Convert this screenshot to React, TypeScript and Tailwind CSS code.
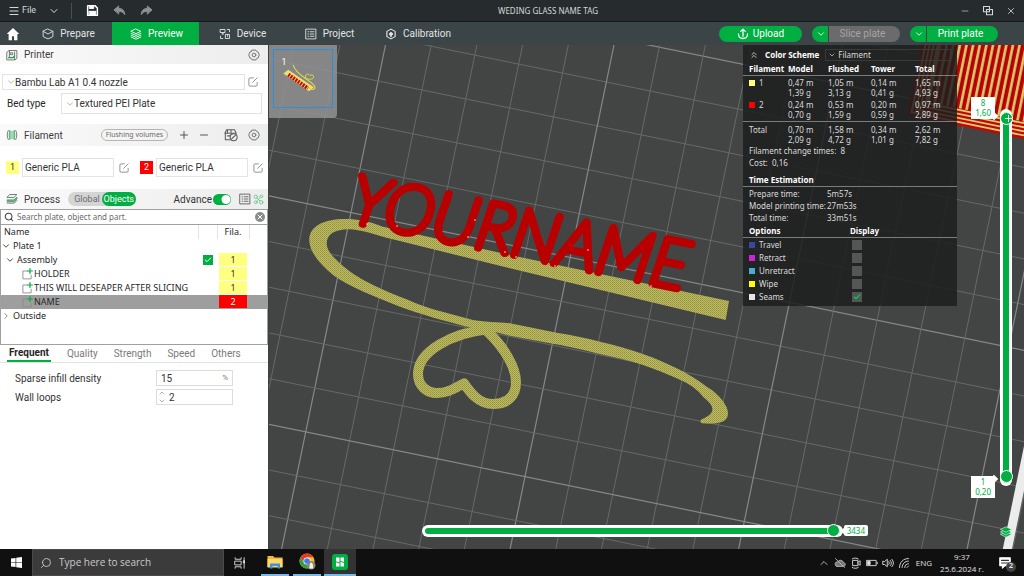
import { ReactNode } from "react";
import {
    Check,
    ChevronDown,
    ChevronRight,
    ChevronUp,
    ChevronsUp,
    Menu,
    Minus,
    Plus,
    Search,
    X,
} from "lucide-react";


const filaments = [
    { id: 1, name: "Generic PLA", color: "bg-[#ffff80] text-[#333]" },
    { id: 2, name: "Generic PLA", color: "bg-[#ff0000] text-white" },
];

const parts = [
    { name: "HOLDER", filament: 1, selected: false },
    { name: "THIS WILL DESEAPER AFTER SLICING", filament: 1, selected: false },
    { name: "NAME", filament: 2, selected: true },
];

const usage = [
    { label: "1", color: "bg-[#ffff80]", meters: ["0,47 m", "1,05 m", "0,14 m", "1,65 m"], grams: ["1,39 g", "3,13 g", "0,41 g", "4,93 g"] },
    { label: "2", color: "bg-[#ff0000]", meters: ["0,24 m", "0,53 m", "0,20 m", "0,97 m"], grams: ["0,70 g", "1,59 g", "0,59 g", "2,89 g"] },
    { label: "Total", color: "", meters: ["0,70 m", "1,58 m", "0,34 m", "2,62 m"], grams: ["2,09 g", "4,72 g", "1,01 g", "7,82 g"] },
];

const times = [
    { label: "Prepare time:", value: "5m57s" },
    { label: "Model printing time:", value: "27m53s" },
    { label: "Total time:", value: "33m51s" },
];

const options = [
    { label: "Travel", color: "bg-[#38489b]", checked: false },
    { label: "Retract", color: "bg-[#cd22d6]", checked: false },
    { label: "Unretract", color: "bg-[#49adcf]", checked: false },
    { label: "Wipe", color: "bg-[#ffff00]", checked: false },
    { label: "Seams", color: "bg-[#e6e6e6]", checked: true },
];

/* ---------- icons ---------- */

const Svg = ({ className, children, box = 16 }: { className: string, children: ReactNode, box?: number }) => (
    <svg viewBox={`0 0 ${box} ${box}`} className={className} fill="none" stroke="currentColor" strokeWidth={1.2} strokeLinecap="round" strokeLinejoin="round" aria-hidden="true">
        {children}
    </svg>
);

const HexGear = ({ className }: { className: string }) => (
    <Svg className={className}>
        <path d="M5.500 1.500h5l1 1.800 2 .7 1.500 4-1.500 4-2 .7-1 1.800h-5l-1-1.800-2-.7L1 8l1.500-4 2-.7z" />
        <circle cx="8" cy="8" r="2.500" />
    </Svg>
);

const EditIcon = () => (
    <Svg className="size-3 text-[#8a8a8a]">
        <path d="M8.500 2.500H4A1.500 1.500 0 0 0 2.500 4v8A1.500 1.500 0 0 0 4 13.500h8a1.500 1.500 0 0 0 1.500-1.500V8.500M7.500 8.500l6-6" />
    </Svg>
);

const PartIcon = () => (
    <Svg className="size-3">
        <path d="M8.500 4H2.500v10.500h11V9.500" stroke="#8b8b8b" />
        <path d="M12 .8v6.400M8.800 4h6.400" stroke="#00ae42" strokeWidth={1.600} />
    </Svg>
);

const CubeIcon = () => (
    <Svg className="size-3">
        <path d="M8 1.500 14.500 4.500v7L8 14.500l-6.500-3v-7zM1.500 4.500 8 8l6.500-3.500" />
    </Svg>
);

const LayersIcon = ({ className }: { className: string }) => (
    <Svg className={className}>
        <path d="M8 1.500 14.500 4.500 8 7.500 1.500 4.500zM1.500 7 8 10l6.500-3M1.500 9.500l6.500 3 6.500-3M1.500 12 8 15l6.500-3" />
    </Svg>
);

const DeviceIcon = () => (
    <Svg className="size-3">
        <path d="M2 2h6v4H2zM4 8h2M5 6v2M11 2h3v3M2 11v3h3M9 8.500h5V14H9zM11.500 8.500v3" />
    </Svg>
);

const ListIcon = ({ className }: { className: string }) => (
    <Svg className={className}>
        <path d="M1.500 1.500h13v13h-13zM4 5h1M7 5h5M4 8h1M7 8h5M4 11h1M7 11h5" />
    </Svg>
);

const CalibrationIcon = () => (
    <Svg className="size-3">
        <path d="M8 1.500 13.500 4.500v7L8 14.500l-5.500-3v-7z" strokeWidth={1.500} />
        <circle cx="8" cy="8" r="2" fill="currentColor" />
        <path d="M8 8v3.500" strokeWidth={1.800} />
    </Svg>
);

const PrinterIcon = () => (
    <Svg className="size-3 text-[#6b6b6b]">
        <path d="M1.500 4 4 2h10.500v10.500L12 14.500H1.500zM4.500 2v9.500M11.500 4v10" />
        <path d="M3.500 11.500h6l1.500-2" stroke="#00ae42" strokeWidth={1.800} />
        <path d="M6 5h3v2.500H6z" />
    </Svg>
);

const FilamentIcon = () => (
    <Svg className="size-3 text-[#6b6b6b]">
        <path d="M3 2C1 5 1 11 3 14M13 2c2 3 2 9 0 12" />
        <path d="M5.500 3v10M8 3v10M10.500 3v10M5 2c-1 3-1 9 0 12M11 2c1 3 1 9 0 12" stroke="#3fae66" />
    </Svg>
);

const ProcessIcon = () => (
    <Svg className="size-3 text-[#6b6b6b]">
        <path d="M1.500 5.500 5 2h9.500L11 5.500zM1.500 13.500H11l3.500-3.500" />
        <path d="M1.500 9.500H11l3.500-3.500" stroke="#00ae42" strokeWidth={1.500} />
        <path d="M1.500 11.500H11l3.500-3.500" />
    </Svg>
);

const AmsIcon = () => (
    <Svg className="size-[14px] text-[#5c5c5c]">
        <path d="M3 2h9l2 4H1zM1.500 6v7.500H7M4 9h3M4 2v4M8 2v4" />
        <circle cx="11" cy="10.500" r="4" />
        <path d="m9 12 4-3.500" />
    </Svg>
);

const CompareIcon = () => (
    <Svg className="size-[11px] text-[#5fc98a]">
        <circle cx="4" cy="4" r="2.500" />
        <circle cx="12" cy="3.500" r="2" />
        <circle cx="4" cy="12" r="2" />
        <circle cx="12" cy="12" r="2.500" />
        <path d="m6 6 4 4M10.500 5 5.500 10.500" />
    </Svg>
);

/* ---------- top bars ---------- */

const TitleBar = () => (
    <header className="flex h-[22px] shrink-0 items-center border-b border-[#14191a] bg-[#262c2e] text-[#d5d8d8]">
        <div className="flex flex-1 items-center">
            <button className="ml-2 flex items-center gap-0.5 text-[9px]"><Menu className="size-3" />File</button>
            <button className="ml-3 flex" aria-label="File menu"><ChevronDown className="size-3" /></button>
            <span className="ml-[11px] h-4 w-px bg-[#4b5152]" />
            <button className="ml-3.5 flex text-white" aria-label="Save">
                <Svg className="size-[13px]">
                    <path d="M2 2h9l3 3v9H2z" strokeWidth={1.800} />
                    <path d="M4.500 2h5v3.500h-5zM4 9h8v5H4z" fill="currentColor" />
                </Svg>
            </button>
            <button className="ml-3.5 flex text-[#8d9293]" aria-label="Undo">
                <Svg className="size-[13px]"><path d="M1.500 7 7 2.500V5.500c4.500 0 7 2.500 7.500 7.500-2-2.800-4-4-7.500-4v3z" fill="currentColor" /></Svg>
            </button>
            <button className="ml-3.5 flex text-[#8d9293]" aria-label="Redo">
                <Svg className="size-[13px]"><path d="M14.500 7 9 2.500V5.500C4.500 5.500 2 8 1.500 13c2-2.800 4-4 7.500-4v3z" fill="currentColor" /></Svg>
            </button>
        </div>
        <h1 className="ml-20 font-['Noto_Sans'] text-[8px] whitespace-nowrap">WEDING GLASS NAME TAG</h1>
        <div className="flex flex-1 items-center justify-end gap-3 pr-2">
            <button aria-label="Minimize"><Minus className="size-2.5" strokeWidth={1.500} /></button>
            <button aria-label="Restore">
                <Svg className="size-3"><path d="M2 2h8v7H2zM6 6h8v7H6z" strokeWidth={1.400} /></Svg>
            </button>
            <button aria-label="Close"><X className="size-2.5" strokeWidth={2} /></button>
        </div>
    </header>
);

const SplitButton = ({ label, disabled }: { label: string, disabled?: boolean }) => (
    <div className="flex h-4 overflow-hidden rounded-full text-[10px]">
        <button className="flex w-4 items-center justify-end bg-[#00ae42] pr-0.5 text-white" aria-label={label + " options"}><ChevronDown className="size-2.5" /></button>
        <button disabled={disabled} className={disabled ? "ml-px w-[71px] bg-[#6b6b6b] pr-1 text-[#a5a5a5]" : "ml-px w-[71px] bg-[#00ae42] pr-1 text-white"}>{label}</button>
    </div>
);

const NavBar = () => (
    <nav className="flex h-[23px] shrink-0 items-center bg-[#3b4446] text-[10px] text-[#e2e5e5]">
        <button className="flex w-[25px] justify-center text-white" aria-label="Home">
            <svg viewBox="0 0 16 16" className="size-[14px]" fill="currentColor"><path d="M8 1 0.800 8H3v7h3.800v-4.500h2.400V15H13V8h2.200z" /></svg>
        </button>
        <button className="flex h-full w-[87px] items-center justify-center gap-1.5"><CubeIcon />Prepare</button>
        <button className="flex h-full w-[87px] items-center justify-center gap-1.5 bg-[#00ae42] pl-0.5 text-white"><LayersIcon className="size-3" />Preview</button>
        <button className="flex h-full w-[87px] items-center justify-center gap-1.5"><DeviceIcon />Device</button>
        <button className="flex h-full w-[87px] items-center justify-center gap-1.5"><ListIcon className="size-3" />Project</button>
        <button className="flex h-full w-[90px] items-center justify-center gap-1.5"><CalibrationIcon />Calibration</button>
        <div className="ml-auto flex gap-2.5 pr-[26px]">
            <button className="flex h-4 w-[83px] items-center justify-center gap-1 rounded-full bg-[#00ae42] text-white">
                <Svg className="size-3"><path d="M8 11V1.500M5 4.500 8 1.500l3 3M2 8c0 8 12 8 12 0" strokeWidth={1.700} /></Svg>
                Upload
            </button>
            <SplitButton label="Slice plate" disabled />
            <SplitButton label="Print plate" />
        </div>
    </nav>
);

/* ---------- sidebar ---------- */

const SectionHeader = ({ icon, title, children }: { icon: ReactNode, title: string, children: ReactNode }) => (
    <div className="flex items-center bg-linear-to-r from-[#fafafa] to-[#ededed] pr-2 pl-1.5">
        {icon}
        <h2 className="ml-1.5 text-[10px] text-[#3c3c3c]">{title}</h2>
        {children}
    </div>
);

const SelectBox = ({ id, label, value, className }: { id: string, label?: string, value: string, className: string }) => (
    <div className={"relative flex items-center border border-[#e3e3e3] " + className}>
        <ChevronDown className="absolute left-[3px] size-2.5 text-[#8a8a8a]" strokeWidth={1.500} />
        <select id={id} aria-label={label} defaultValue={value} className="h-full w-full appearance-none bg-transparent pl-3 text-[10px] text-[#333] outline-none">
            <option>{value}</option>
        </select>
    </div>
);

const FilamentCell = ({ id }: { id: number }) => (
    <td className="p-0 px-0.5">
        <div className={"mb-px h-[13px] text-center leading-[13px] " + filaments[id - 1].color}>{id}</div>
    </td>
);

const Sidebar = () => (
    <aside className="flex w-[269px] shrink-0 flex-col border-r border-[#3c4041] bg-white text-[#333]">
        <div className="flex flex-col [&>*]:h-[19px]">
            <SectionHeader icon={<PrinterIcon />} title="Printer">
                <HexGear className="ml-auto size-3 text-[#6b6b6b]" />
            </SectionHeader>
        </div>
        <div className="mt-2.5 flex items-center gap-0.5 pl-0.5">
            <SelectBox id="printer" label="Printer" value="Bambu Lab A1 0.4 nozzle" className="h-4 w-[243px]" />
            <button aria-label="Edit printer"><EditIcon /></button>
        </div>
        <div className="mt-[3px] flex items-center pl-[7px]">
            <label htmlFor="bed" className="w-[54px] text-[10px] text-[#262626]">Bed type</label>
            <SelectBox id="bed" value="Textured PEI Plate" className="h-[21px] w-[201px]" />
        </div>

        <div className="mt-[10px] flex flex-col [&>*]:h-[22px]">
            <SectionHeader icon={<FilamentIcon />} title="Filament">
                <button className="ml-auto h-3 w-[67px] rounded-full border border-[#b5b5b5] font-['Noto_Sans'] text-[7px] leading-[10px] text-[#6b6b6b]">Flushing volumes</button>
                <button className="ml-2.5 text-[#555]" aria-label="Add filament"><Plus className="size-3" /></button>
                <button className="ml-2 text-[#555]" aria-label="Remove filament"><Minus className="size-3" /></button>
                <button className="ml-3.5" aria-label="Sync filaments"><AmsIcon /></button>
                <button className="ml-2.5" aria-label="Filament settings"><HexGear className="size-3 text-[#6b6b6b]" /></button>
            </SectionHeader>
        </div>
        <div className="mt-3 flex gap-2.5 pr-1 pl-1.5">
            {filaments.map((f) => (
                <div key={f.id} className="flex flex-1 items-center">
                    <span className={"flex size-[13px] items-center justify-center text-[9px] " + f.color}>{f.id}</span>
                    <input aria-label={"Filament " + f.id} defaultValue={f.name} className="ml-[3px] h-[19px] w-0 flex-1 border border-[#e3e3e3] px-0.5 text-[10px] outline-none" />
                    <button className="ml-1 flex" aria-label={"Edit filament " + f.id}><EditIcon /></button>
                </div>
            ))}
        </div>

        <div className="mt-[12px] flex flex-col [&>*]:h-5">
            <SectionHeader icon={<ProcessIcon />} title="Process">
                <div className="ml-2 flex h-[14px] rounded-full bg-[#d4d4d4] text-[9px] leading-[14px]">
                    <button className="pl-1.5 text-[#6b6b6b]">Global</button>
                    <button className="ml-0.5 w-[34px] rounded-full bg-[#00ae42] text-white">Objects</button>
                </div>
                <label htmlFor="advance" className="ml-auto text-[10px]">Advance</label>
                <input id="advance" type="checkbox" role="switch" defaultChecked className="ml-px h-[11px] w-[18px] appearance-none rounded-full bg-[#00ae42] bg-[radial-gradient(circle_at_13px_50%,white_4px,transparent_5px)]" />
                <button className="ml-2" aria-label="Parameter list"><ListIcon className="size-3 text-[#5c5c5c]" /></button>
                <button className="ml-0.5 -mr-1" aria-label="Compare presets"><CompareIcon /></button>
            </SectionHeader>
        </div>

        <div className="flex h-4 items-center border border-[#a0a0a0] pr-0.5 pl-[3px]">
            <Search className="size-2.5 text-[#444]" strokeWidth={2.500} />
            <input aria-label="Search objects" placeholder="Search plate, object and part." className="ml-[3px] w-0 flex-1 font-['Noto_Sans'] text-[8px] outline-none placeholder:text-[#6b6b6b]" />
            <button className="flex size-2.5 items-center justify-center rounded-full bg-[#8a8a8a] text-white" aria-label="Clear search"><X className="size-2" strokeWidth={3} /></button>
        </div>
        <div className="h-[120px] border-x border-b border-[#a0a0a0]">
            <table className="w-full table-fixed border-collapse font-['Noto_Sans'] text-[9px] text-[#262626]">
                <thead>
                    <tr className="h-[14px] text-left leading-[14px]">
                        <th className="p-0 pl-[3px] font-normal">Name</th>
                        <th className="w-[19px] border-l border-[#e3e3e3] p-0"></th>
                        <th className="w-8 border-x border-[#e3e3e3] p-0 text-center font-normal">Fila.</th>
                        <th className="w-[18px] p-0"></th>
                    </tr>
                </thead>
                <tbody className="leading-[14px]">
                    <tr>
                        <td className="p-0" colSpan={4}><span className="flex items-center gap-0.5"><ChevronDown className="size-2.5" />Plate 1</span></td>
                    </tr>
                    <tr>
                        <td className="p-0"><span className="flex items-center gap-0.5 pl-1"><ChevronDown className="size-2.5" />Assembly</span></td>
                        <td className="p-0">
                            <label className="relative flex items-center justify-center">
                                <input type="checkbox" defaultChecked aria-label="Assembly printable" className="size-2.5 appearance-none bg-[#00ae42]" />
                                <Check className="absolute size-2 text-white" strokeWidth={3} />
                            </label>
                        </td>
                        <FilamentCell id={1} />
                        <td className="p-0"></td>
                    </tr>
                    {parts.map((p) => (
                        <tr key={p.name} className={p.selected ? "bg-[#9e9e9e]" : ""}>
                            <td className="p-0" colSpan={2}><span className="flex items-center gap-px pl-5 whitespace-nowrap"><PartIcon />{p.name}</span></td>
                            <FilamentCell id={p.filament} />
                            <td className="p-0"></td>
                        </tr>
                    ))}
                    <tr>
                        <td className="p-0" colSpan={4}><span className="flex items-center gap-0.5"><ChevronRight className="size-2.5 text-[#777]" />Outside</span></td>
                    </tr>
                </tbody>
            </table>
        </div>

        <div className="flex h-[18px] items-stretch gap-4 border-b border-[#e3e3e3] px-[7px] text-[10px] text-[#7a7a7a]">
            <button className="border-b-2 border-[#00ae42] px-0.5 font-bold text-[#262626]">Frequent</button>
            <button>Quality</button>
            <button>Strength</button>
            <button>Speed</button>
            <button>Others</button>
        </div>
        <div className="mt-[7px] flex flex-col gap-[3px] pl-[15px] text-[10px]">
            <div className="flex items-center">
                <label htmlFor="infill" className="w-[141px]">Sparse infill density</label>
                <div className="flex h-4 w-[77px] items-center border border-[#dcdcdc] pr-1 pl-1">
                    <input id="infill" defaultValue="15" className="w-0 flex-1 outline-none" />
                    <span className="text-[8px] text-[#7a7a7a]">%</span>
                </div>
            </div>
            <div className="flex items-center">
                <label htmlFor="loops" className="w-[141px]">Wall loops</label>
                <div className="flex h-4 w-[77px] items-center border border-[#dcdcdc] pl-px">
                    <span className="flex flex-col text-[#8a8a8a]"><ChevronUp className="size-2" /><ChevronDown className="size-2" /></span>
                    <input id="loops" defaultValue="2" className="ml-[3px] w-0 flex-1 outline-none" />
                </div>
            </div>
        </div>
    </aside>
);

/* ---------- 3d plate ---------- */

const ribbon = "M729 301 L510 255 L383 226.700 C368 221 357 219 346 219 C322 219 309.300 227 309.300 240 C309.300 252 320 264 333 275 C350 287 375 297 400 306.700 C420 314 445 321 468 327 L495 332 L510 335.700 L550 343.300 C566 346 580 349 596.700 353.300 C613 357 628 360 643 365 C655 369 667 374 676.700 378.300 C690 384 698 390 703 396.700 C708 401 713 405 712.300 410 C712 414 707 417 700.700 420 C700 422 701 423 703 423.300 C712 424 721 423.500 725 420 C729 417 728.500 411 726 406 C721 397 714 391 706.700 386.700 C698 380 688 373.500 676.700 368.300 C666 363 655 358 643 354 C629 349 614 345 600 341.700 C586 338 571 335 556.700 332.700 L510 323.300 C498 322 485 322 473 320 L433 309.300 C422 306 411 301 400 296.700 C388 292 377 287 366.700 281.700 C354 275 344 268 336.700 260 C330 254 326.700 249 326.700 243.300 C326.700 234 336 229 350 229.300 C364 230 378 236 391.700 239 L510 268.300 L725.700 320 Z";
const heart = "M490 329 C450 333 418 352 418 374 C418 386 427 393 437 393 C448 393 455 388 464 383.500 C470 392 478 404 493 404 C508 404 516 396 516 382 C516 368 505 348 487 331";
const seams = [[367, 224], [397, 226], [475, 220], [468, 237], [505, 252], [516, 257], [588, 250], [555, 266], [651, 286]];

const gridLines = Array.from({ length: 30 }, (_, i) => i - 14);

const Plate = () => (
    <svg viewBox="269 45 755 504" preserveAspectRatio="xMinYMin slice" className="absolute inset-0 h-full w-full" role="img" aria-label="Sliced plate">
        <defs>
            <pattern id="weave" width="2" height="2" patternUnits="userSpaceOnUse">
                <rect width="2" height="2" fill="#bebb5c" />
                <rect width="1" height="1" fill="#93924a" />
                <rect x="1" y="1" width="1" height="1" fill="#a09f52" />
            </pattern>
            <pattern id="infill-lines" width="6.500" height="10" patternUnits="userSpaceOnUse">
                <rect width="6.500" height="10" fill="#c80505" />
                <rect x="1" width="2.500" height="10" fill="#d3cf72" />
                <rect x="4.500" width="0.800" height="10" fill="#8e0000" />
            </pattern>
        </defs>
        <rect x="269" y="45" width="755" height="504" fill="#434544" />
        {gridLines.map((k) => (
            <g key={k} stroke={k % 5 === 0 ? "#868887" : "#676968"} strokeWidth={k % 5 === 0 ? 1.200 : 1}>
                <line x1={842.500 + k * 45.700} y1="45" x2={738.600 + k * 45.700} y2="549" />
                <line x1="269" y1={424.300 + k * 45.700} x2="1024" y2={578.800 + k * 45.700} />
            </g>
        ))}
        <path d="M1050 342 L1007 551" stroke="#ececec" strokeWidth="9" />
        <g transform="rotate(11.600 907 115)">
            <rect x="907" y="-20" width="160" height="135" fill="#c80505" />
            <rect x="923" y="-20" width="140" height="118" fill="url(#infill-lines)" />
            <path d="M911 -20V111.500H1060M915 -20V107.500H1060M919 -20V103.500H1060M923 -20V99.500H1060" stroke="#d3cf72" strokeWidth="1.800" fill="none" />
        </g>
        <path d={ribbon} fill="url(#weave)" />
        <path d={heart} fill="none" stroke="url(#weave)" strokeWidth="10" strokeLinejoin="round" />
        <text
            x="348"
            y="221"
            transform="rotate(11.600 348 221)"
            className="font-['Lato'] text-[67px] font-thin italic"
            fill="#b80000"
            stroke="#b80000"
            strokeWidth="7.500"
            strokeLinejoin="round"
        >
            YOURNAME
        </text>
        {seams.map(([x, y]) => <circle key={x} cx={x} cy={y} r="0.800" fill="#f5dede" />)}
    </svg>
);

const Thumbnail = () => (
    <button className="absolute top-0 left-0 h-[73px] w-[68px] rounded-br bg-[#929292]/85 p-1 pb-2.5" aria-label="Plate 1">
        <span className="block h-full border border-[#2a8fe0]">
            <svg viewBox="0 0 58 58" className="h-full w-full">
                <text x="7" y="15" fontSize="9" fill="#fff">1</text>
                <path d="M9 24 L14 20 L40 38 L35 42z" fill="#e8e070" />
                <path d="M19 15c1 6 8 11 14 15s9 7 8 9-5 1-8-1" stroke="#e0d84a" strokeWidth="1.200" fill="none" />
                <path d="M32 29c-2-4 2-6 4-3 3-2 5 1 3 3-2 1-4 1-7 0z" stroke="#e0d84a" fill="none" />
                <path d="M14 25 34 39" stroke="#c40808" strokeWidth="4" strokeDasharray="2 1" fill="none" />
            </svg>
        </span>
    </button>
);

const Legend = () => (
    <section className="absolute top-0 right-[67px] w-[214px] bg-[#1c1d1d]/85 pt-px pb-[3px] font-['Noto_Sans'] text-[8px] leading-[10px] text-[#dcdcdc]">
        <div className="flex h-[17px] items-center pr-1.5 pl-1.5">
            <ChevronsUp className="size-2.5" />
            <label htmlFor="scheme" className="ml-1.5 font-bold text-white">Color Scheme</label>
            <div className="relative ml-1.5 flex h-3 flex-1 items-center border border-[#3a3a3a]">
                <ChevronDown className="absolute left-0.5 size-2" />
                <select id="scheme" className="h-full w-full appearance-none bg-transparent pl-3 outline-none"><option>Filament</option></select>
            </div>
        </div>
        <table className="w-full table-fixed border-collapse">
            <thead>
                <tr className="border-b border-[#7c7c7c] text-left text-white">
                    <th className="w-[45px] p-0 pt-px pb-px pl-1.5">Filament</th>
                    <th className="w-[40px] p-0 pt-px pb-px">Model</th>
                    <th className="w-[43px] p-0 pt-px pb-px">Flushed</th>
                    <th className="w-[44px] p-0 pt-px pb-px">Tower</th>
                    <th className="p-0 pt-px pb-px">Total</th>
                </tr>
            </thead>
            <tbody className="[&>tr:last-child>td]:pt-[3px] [&>tr:nth-child(2)>td]:pb-px">
                {usage.map((u) => (
                    <tr key={u.label} className="align-top last:border-t last:border-[#7c7c7c]">
                        <td className="p-0 pt-0.5 pl-1.5">
                            <span className="flex items-center gap-1">
                                {u.color ? <span className={"size-1.5 " + u.color} /> : null}
                                {u.label}
                            </span>
                        </td>
                        {u.meters.map((m, i) => (
                            <td key={i} className="p-0 pt-0.5">{m}<br />{u.grams[i]}</td>
                        ))}
                    </tr>
                ))}
            </tbody>
        </table>
        <div className="pl-1.5 leading-3">
            <p>Filament change times:&nbsp; 8</p>
            <p>Cost:&nbsp; 0,16</p>
        </div>
        <h3 className="mt-1.5 border-b border-[#7c7c7c] pb-px pl-1.5 font-bold text-white">Time Estimation</h3>
        <dl className="mt-px grid grid-cols-[78px_1fr] pl-1.5 leading-3">
            {times.map((t) => (
                <div key={t.label} className="contents">
                    <dt>{t.label}</dt>
                    <dd>{t.value}</dd>
                </div>
            ))}
        </dl>
        <div className="mt-0.5 grid grid-cols-[101px_1fr] border-b border-[#7c7c7c] pb-px pl-1.5 font-bold text-white">
            <h3>Options</h3>
            <span>Display</span>
        </div>
        <div>
            {options.map((o) => (
                <label key={o.label} className="grid h-[13px] grid-cols-[10px_93px_10px] items-center pl-1.5">
                    <span className={"size-1.5 " + o.color} />
                    <span>{o.label}</span>
                    <span className="relative flex items-center justify-center">
                        <input type="checkbox" defaultChecked={o.checked} className="size-2.5 appearance-none bg-[#555]" />
                        {o.checked ? <Check className="absolute size-2 text-[#00c94c]" strokeWidth={4} /> : null}
                    </span>
                </label>
            ))}
        </div>
    </section>
);

const thumb = "[&::-webkit-slider-thumb]:size-[13px] [&::-webkit-slider-thumb]:appearance-none [&::-webkit-slider-thumb]:rounded-full [&::-webkit-slider-thumb]:border [&::-webkit-slider-thumb]:border-white [&::-webkit-slider-thumb]:bg-[#00ae42]";
const tail = "relative before:absolute before:size-1.5 before:rotate-45 before:bg-white ";

const LayerTag = ({ layer, height, className }: { layer: string, height: string, className: string }) => (
    <output className={tail + "flex flex-col items-center bg-white px-1 py-px font-['Noto_Sans'] text-[8px] leading-[10px] text-[#00ae42] before:-right-0.5 " + className}>
        <span>{layer}</span>
        <span>{height}</span>
    </output>
);

const Viewport = () => (
    <main className="relative flex-1 overflow-hidden">
        <Plate />
        <Thumbnail />
        <Legend />

        <div className="absolute top-[67px] right-[15px] flex h-[371px] items-stretch gap-2">
            <div className="flex flex-col justify-between">
                <LayerTag layer="8" height="1,60" className="-mt-[15px] before:bottom-0" />
                <LayerTag layer="1" height="0,20" className="-mb-[15px] before:top-0" />
            </div>
            <div className="grid w-1.5">
                <input type="range" min={1} max={8} defaultValue={8} aria-label="Top layer" className={"col-start-1 row-start-1 h-full w-1.5 appearance-none rounded-full bg-[#00ae42] ring-3 ring-white [direction:rtl] [writing-mode:vertical-lr] " + thumb} />
                <input type="range" min={1} max={8} defaultValue={1} aria-label="Bottom layer" className={"pointer-events-none col-start-1 row-start-1 h-full w-1.5 appearance-none bg-transparent [direction:rtl] [writing-mode:vertical-lr] " + thumb} />
                <Plus className="pointer-events-none z-10 col-start-1 row-start-1 mt-px size-[11px] self-start justify-self-center text-white" strokeWidth={2} />
            </div>
        </div>
        <svg viewBox="0 0 16 16" className="absolute right-3 bottom-[11px] size-3" fill="#00ae42" stroke="#e8f7ee" strokeWidth="0.800" aria-hidden="true">
            <path d="M8 7.500 15.500 11 8 15 .500 11z" />
            <path d="M8 4.500 15.500 8 8 12 .500 8z" />
            <path d="M8 1 15.500 4.500 8 8.500 .500 4.500z" />
        </svg>

        <div className="absolute right-[156px] bottom-[13px] left-[156px] flex items-center gap-1">
            <input type="range" min={0} max={3434} defaultValue={3434} aria-label="Move" className={"h-1.5 min-w-0 flex-1 appearance-none rounded-full bg-[#00ae42] ring-3 ring-white " + thumb} />
            <output className={tail + "rounded-xs bg-white px-[3px] font-['Noto_Sans'] text-[8px] leading-[11px] text-[#00ae42] before:top-[3px] before:-left-0.5"}>3434</output>
        </div>
    </main>
);

/* ---------- windows taskbar ---------- */

const Taskbar = () => (
    <footer className="flex h-[27px] shrink-0 items-stretch bg-[#101010] text-[#e0e0e0]">
        <button className="flex w-8 items-center justify-center" aria-label="Start">
            <svg viewBox="0 0 12 12" className="size-[11px]" fill="#fff"><path d="M0 1.700 5 1v4.700H0zM5.700.9 12 0v5.700H5.700zM0 6.300h5V11l-5-.7zM5.700 6.300H12V12l-6.300-.9z" /></svg>
        </button>
        <label className="flex w-48 items-center border border-[#4a4a4a] bg-[#3b3b3b] pl-[7px]">
            <Search className="size-3 -scale-x-100" strokeWidth={1.500} />
            <input aria-label="Search Windows" placeholder="Type here to search" className="ml-[7px] w-0 flex-1 font-['Open_Sans'] text-[10px] outline-none placeholder:text-[#c9c9c9]" />
        </label>
        <button className="flex w-8 items-center justify-center" aria-label="Task view">
            <Svg className="size-3"><path d="M1.500 1v2h8V1M1.500 5.500h8v5h-8zM1.500 15v-2h8v2M13.500 1v14" /><path d="M13 5h1v3h-1z" fill="currentColor" /></Svg>
        </button>
        <button className="ml-[5px] flex w-7 items-center justify-center border-b-2 border-[#76b9ed]" aria-label="File Explorer">
            <svg viewBox="0 0 16 14" className="h-[14px] w-4">
                <path d="M.5 1h5.500l1.500 1.500h8V12H.5z" fill="#f0b93a" />
                <path d="M.5 4h15v8.500H.5z" fill="#ffd766" />
                <path d="M3 13.500V8.500h10v5h-2.500V11h-5v2.500z" fill="#3b95dd" />
            </svg>
        </button>
        <button className="ml-1 flex w-7 items-center justify-center border-b-2 border-[#76b9ed]" aria-label="Chrome">
            <svg viewBox="0 0 18 18" className="size-[17px]">
                <circle cx="8.500" cy="8.500" r="8" fill="#f2c11c" />
                <path d="M1.600 4.500A8 8 0 0 1 15.400 4.500H8.500L5 10.500z" fill="#e23b2e" />
                <path d="M1.600 4.500A8 8 0 0 0 8.500 16.500L12 10.500H5z" fill="#2fa04c" />
                <circle cx="8.500" cy="8.500" r="3.800" fill="#fff" />
                <circle cx="8.500" cy="8.500" r="3" fill="#3b7ded" />
                <circle cx="13" cy="13" r="4.500" fill="#8b8478" />
                <path d="M11 16.500c0-4 .5-6.500 2-6.500s2 2.500 2 6.500z" fill="#f1f1ee" />
            </svg>
        </button>
        <button className="ml-[3px] flex w-8 items-center justify-center border-b-2 border-[#76b9ed] bg-[#333]" aria-label="Bambu Studio">
            <svg viewBox="0 0 16 16" className="size-4">
                <rect width="16" height="16" rx="3" fill="#00ae42" />
                <path d="M4 3.500h3.500v5L4 7.300zM8.500 3.500H12V8L8.500 6.800zM4 8.300l3.500 1.200v3H4zM8.500 7.800 12 9v3.500H8.500z" fill="#fff" />
            </svg>
        </button>

        <div className="ml-auto flex items-center gap-1 pr-2 font-['Open_Sans'] text-[9px]">
            <ChevronUp className="size-3" strokeWidth={1.500} />
            <Svg className="size-3 text-[#b5b5b5]"><path d="M4 12.500h8.500a2.500 2.500 0 0 0 0-5A4 4 0 0 0 5 6.500a3 3 0 0 0-1 6z" fill="#777" /><path d="m2 2 12 12" /></Svg>
            <Svg className="size-3"><path d="M4 4.500h6.500v7H4zM10.500 7l3-2v6l-3-2M3 2.500c2-1.500 6-1.500 8 0M3 14c2 1.500 6 1.500 8 0" /></Svg>
            <Svg className="size-3"><path d="M1 4.500h12.500v7H1zM15 7v2" /><path d="M2.500 6h3v4h-3z" fill="currentColor" /></Svg>
            <Svg className="size-3"><path d="M1 6v4h2.500L7 13V3L3.500 6zM9 6c1 1 1 3 0 4M11 4.500c2 2 2 5 0 7M13 3c3 3 3 7 0 10" /></Svg>
            <Svg className="size-3"><path d="M2 14C2 7 7 2 14 2M5.500 14c0-5 3.500-8.500 8.500-8.500M9 14c0-3 2-5 5-5M12 14l2-2" /></Svg>
            <span className="ml-0.5 text-[8px]">ENG</span>
            <div className="mx-1 w-[44px] text-center text-[8px] leading-3">
                <time className="block whitespace-nowrap">9:37</time>
                <time className="block whitespace-nowrap">25.6.2024 г.</time>
            </div>
            <button className="relative ml-1.5 flex pr-1" aria-label="2 notifications">
                <Svg className="size-[14px] text-white"><path d="M2 2h12v9H8l-3 3v-3H2z" fill="currentColor" /><path d="M4 5h8M4 8h8" stroke="#333" /></Svg>
                <span className="absolute top-1.5 left-2 flex size-2.5 items-center justify-center rounded-full bg-[#444] text-[7px] font-bold">2</span>
            </button>
        </div>
    </footer>
);

const App = () => {
    return <div className="flex min-h-screen flex-col bg-[#434544] font-['Roboto','Noto_Sans',sans-serif]">
        <TitleBar />
        <NavBar />
        <div className="flex flex-1">
            <Sidebar />
            <Viewport />
        </div>
        <Taskbar />
    </div>
}

export default App;
